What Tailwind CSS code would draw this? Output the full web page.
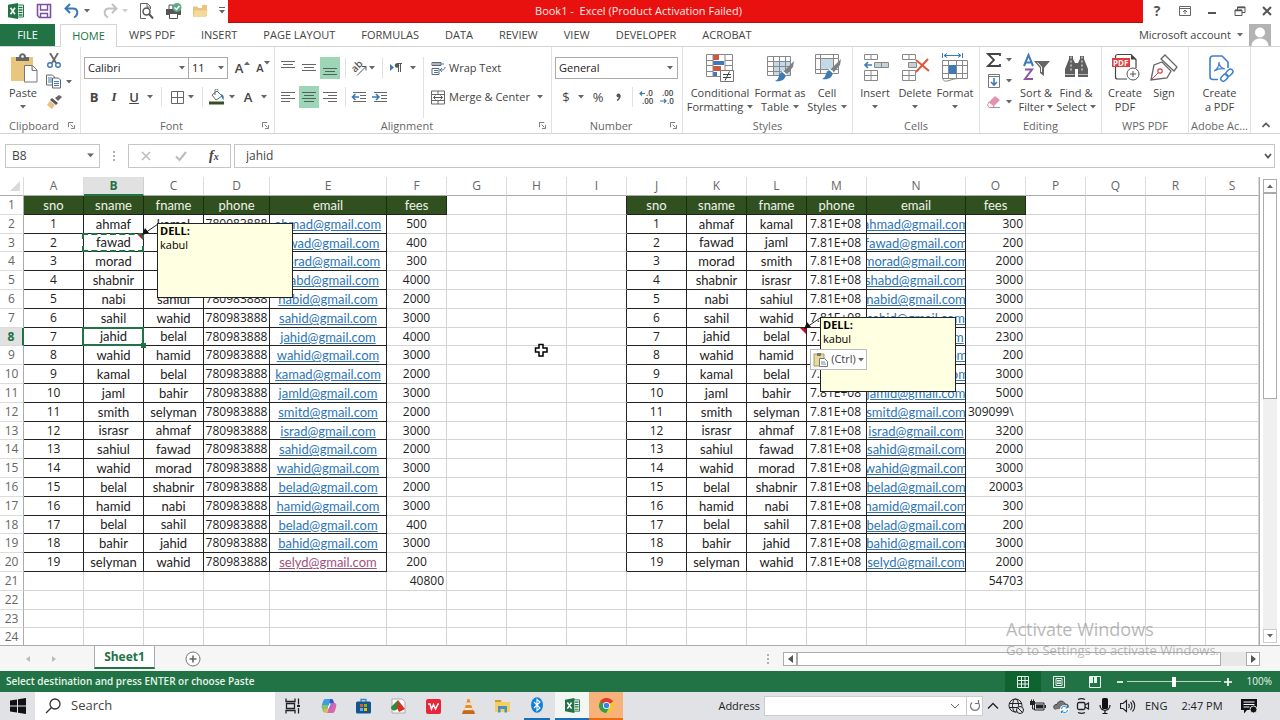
<!DOCTYPE html>
<html lang="en">
<head>
  <title>Book1 - Excel</title>
  <meta charset="utf-8">
  <meta name="viewport" content="width=device-width, initial-scale=1">
  <script src="https://cdn.jsdelivr.net/npm/@tailwindcss/browser@4"></script>
</head>

<body class="h-screen overflow-hidden bg-white font-['Open_Sans','Noto_Sans',sans-serif] text-[11px] text-[#444]">
  <!-- Shared icons -->
  <svg class="hidden">
    <symbol id="caret" viewBox="0 0 6 4"><path d="M0 0h6L3 3.5z" fill="#666"/></symbol>
    <symbol id="launcher" viewBox="0 0 8 8"><path d="M.5 6V.5H6M3 3l3 3M7.500 3.500v4h-4" fill="none" stroke="#666"/></symbol>
    <symbol id="excel" viewBox="0 0 16 16"><path d="M9 2h6.500v12H9z" fill="#fff" stroke="#217346"/><path d="M10.500 4.500h4M10.500 7h4M10.500 9.500h4M10.500 12h4" stroke="#217346" stroke-width="1.300"/><path d="M0 1.800L10 0v16L0 14.200z" fill="#217346"/><path d="M2.500 4.800l4.500 6.500M7 4.800l-4.500 6.500" stroke="#fff" stroke-width="1.600"/></symbol>
    <symbol id="brush" viewBox="0 0 22 22"><path d="M21 0l-1 6-6 7-3-3z" fill="#808080"/><path d="M10 11l3 3c-1 5-5 7-11 6 3-1 3-3 4-5 1-3 2-4 4-4z" fill="#3e7ab5"/><path d="M9 10l4.500 4" stroke="#fff" stroke-width="1.500"/></symbol>
  </svg>

  <div class="flex flex-col h-full">
    <!-- Title bar -->
    <header class="flex h-6 shrink-0">
      <div class="flex items-center w-[228px] pb-[3px]">
        <svg class="w-4 h-4 ml-2"><use href="#excel"/></svg>
        <button aria-label="Save" class="ml-3"><svg class="w-4 h-4" viewBox="0 0 16 16"><path d="M1.500 1.500h13v13h-11l-2-2z" fill="#fff" stroke="#7a4fa3" stroke-width="1.600"/><path d="M4.500 2v5h7V2M4.500 14.500v-4h7v4" fill="none" stroke="#7a4fa3" stroke-width="1.400"/></svg></button>
        <button aria-label="Undo" class="ml-3 flex items-center"><svg class="w-4 h-4" viewBox="0 0 16 16"><path d="M6 1L1.500 5.500 6 10M2 5.500h7c5 0 6 6 1 9" fill="none" stroke="#3b78b8" stroke-width="2"/></svg><svg class="w-[6px] h-1 ml-1"><use href="#caret"/></svg></button>
        <button aria-label="Redo" class="ml-3 flex items-center opacity-60"><svg class="w-4 h-4" viewBox="0 0 16 16"><path d="M10 1l4.500 4.500L10 10M14 5.500H7c-5 0-6 6-1 9" fill="none" stroke="#999" stroke-width="2"/></svg><svg class="w-[6px] h-1 ml-1 opacity-50"><use href="#caret"/></svg></button>
        <button aria-label="Print Preview" class="ml-[10px]"><svg class="w-4 h-4" viewBox="0 0 16 16"><path d="M8 15.500H2.500V.5h7l3 3V6M9 .5V4h3.500" fill="none" stroke="#666"/><circle cx="8.500" cy="8.500" r="3.500" fill="#fff" stroke="#555" stroke-width="1.500"/><path d="M11 11l4 4.500" stroke="#555" stroke-width="2"/></svg></button>
        <button aria-label="Quick Print" class="ml-3"><svg class="w-4 h-4" viewBox="0 0 16 16"><path d="M0 6h15v6H0z" fill="#555"/><path d="M3.500 10.500h8v5h-8zM3 6V2h4v4" fill="#fff" stroke="#555"/><circle cx="11" cy="4.500" r="4.500" fill="#5da98a"/><path d="M8.500 4.500l2 2 3-3.500" fill="none" stroke="#fff" stroke-width="1.500"/></svg></button>
        <button aria-label="Open" class="ml-[10px]"><svg class="w-4 h-4" viewBox="0 0 16 16"><path d="M1 14V3.500h4L6.500 5H10V2h5v11z" fill="#e8c47c"/><path d="M1 14l2-6.500h12.500L14 14z" fill="#f5d99b"/></svg></button>
        <button aria-label="Customize" class="ml-[10px]"><svg class="w-2 h-2" viewBox="0 0 8 8"><path d="M1 .5h6" stroke="#666"/><path d="M1 3h6L4 6.500z" fill="#666"/></svg></button>
      </div>
      <div class="flex-1 flex justify-center items-center h-[23px] pr-[94px] bg-[#e8110f] border-b border-[#b01010] text-[#fde8e4]">
        <h1>Book1 -&nbsp; Excel (Product Activation Failed)</h1>
      </div>
      <div class="flex items-center w-[137px] pb-[3px] pl-2">
        <button aria-label="Help" class="w-3 text-sm font-bold text-[#555]">?</button>
        <button aria-label="Ribbon Display Options" class="ml-4"><svg class="w-3 h-3" viewBox="0 0 12 12"><path d="M.5 1.500h11v9H.5zM.5 3.500h11M6 9V5M4 7l2-2 2 2" fill="none" stroke="#666"/></svg></button>
        <button aria-label="Minimize" class="ml-4"><svg class="w-3 h-3" viewBox="0 0 12 12"><path d="M1 8h8" stroke="#555" stroke-width="2"/></svg></button>
        <button aria-label="Restore" class="ml-[15px]"><svg class="w-3 h-3" viewBox="0 0 12 12"><path d="M1 5h7v5.500H1zM3.500 5V2h7.500v5.500H8" fill="none" stroke="#555"/><path d="M1 5.500h7M3.500 2.500h7.500" stroke="#555" stroke-width="1.500"/></svg></button>
        <button aria-label="Close" class="ml-[15px]"><svg class="w-3 h-3" viewBox="0 0 12 12"><path d="M2 2l8 8M10 2l-8 8" stroke="#555" stroke-width="2"/></svg></button>
      </div>
    </header>

    <!-- Ribbon tabs -->
    <nav class="flex h-[23px] shrink-0 items-end border-b border-[#d4d4d4]">
      <button class="w-[55px] h-full bg-[#217346] text-white">FILE</button>
      <button class="w-[57px] h-[23px] ml-[5px] -mb-px bg-white border border-b-0 border-[#d4d4d4] text-[#217346]">HOME</button>
      <div class="flex flex-1 h-full items-center gap-[26px] pl-3 whitespace-nowrap">
        <button>WPS PDF</button>
        <button>INSERT</button>
        <button>PAGE LAYOUT</button>
        <button>FORMULAS</button>
        <button>DATA</button>
        <button>REVIEW</button>
        <button>VIEW</button>
        <button>DEVELOPER</button>
        <button>ACROBAT</button>
      </div>
      <button class="flex items-center h-full whitespace-nowrap">Microsoft account <svg class="w-[6px] h-1 ml-[6px]"><use href="#caret"/></svg></button>
      <svg class="w-[22px] h-[22px] ml-[6px] mr-[9px]" viewBox="0 0 22 22"><path d="M0 0h22v22H0z" fill="#b3b3b3"/><circle cx="11" cy="8.500" r="5" fill="#fff"/><path d="M2.500 22c0-10 17-10 17 0z" fill="#fff"/></svg>
    </nav>

    <!-- Ribbon -->
    <section class="flex h-[87px] shrink-0 border-b border-[#d4d4d4] leading-[14px]">
      <!-- Clipboard -->
      <div class="flex flex-col w-[81px] border-r border-[#e1e1e1]">
        <div class="flex flex-1 pt-[6px]">
          <button class="flex flex-col items-center w-[46px]">
            <svg class="w-[30px] h-[30px] mb-[3px]" viewBox="0 0 30 30"><path d="M3 4h22v24H3z" fill="#e9c67d"/><path d="M8 4h3c0-5 7-5 7 0h3v4H8z" fill="#666"/><circle cx="14.500" cy="3.500" r="1.300" fill="#fff"/><path d="M16.500 12.500h8l4.500 4.500v12H16.500zM24 13v4.500h5" fill="#fff" stroke="#777"/></svg>
            Paste
            <svg class="w-[6px] h-1 mt-[5px]"><use href="#caret"/></svg>
          </button>
          <div class="flex flex-col gap-[6px]">
            <button aria-label="Cut"><svg class="w-4 h-[15px]" viewBox="0 0 16 15"><path d="M4 0l6 10M12 0L6 10" stroke="#666" stroke-width="1.800"/><circle cx="4" cy="12" r="2.300" fill="none" stroke="#3b78b8" stroke-width="1.400"/><circle cx="12" cy="12" r="2.300" fill="none" stroke="#3b78b8" stroke-width="1.400"/></svg></button>
            <button aria-label="Copy" class="flex items-center"><svg class="w-4 h-[15px]" viewBox="0 0 16 15"><path d="M.5 1h6l2 2v8h-8z" fill="#fff" stroke="#666"/><path d="M2 4h4M2 6h4M2 8h4" stroke="#3b78b8"/><path d="M6.500 4h6l2 2v8h-8z" fill="#fff" stroke="#666"/><path d="M8 7.500h5M8 9.500h5M8 11.500h5" stroke="#3b78b8"/></svg><svg class="w-[6px] h-1 ml-1"><use href="#caret"/></svg></button>
            <button aria-label="Format Painter"><svg class="w-4 h-[15px]" viewBox="0 0 16 15"><path d="M13 0l3 2-4 4-3-3z" fill="#666"/><path d="M6 3l6 5-2 2-6-5z" fill="#555"/><path d="M4 6l5 4-3 4-5-4z" fill="#edbd83"/></svg></button>
          </div>
        </div>
        <div class="flex items-center h-[15px] pr-[5px]"><span class="flex-1 text-center text-[#666]">Clipboard</span><svg class="w-[7px] h-[7px]"><use href="#launcher"/></svg></div>
      </div>

      <!-- Font -->
      <div class="flex flex-col w-[194px] border-r border-[#e1e1e1]">
        <div class="flex-1 pt-[10px] pl-[3px]">
          <div class="flex items-center h-[22px]">
            <label class="relative flex items-center"><select aria-label="Font" class="appearance-none w-[105px] h-[22px] pl-[3px] border border-[#ababab] bg-white text-[#222]"><option>Calibri</option></select><svg class="absolute right-1 w-[6px] h-1"><use href="#caret"/></svg></label>
            <label class="relative flex items-center -ml-px"><select aria-label="Font Size" class="appearance-none w-10 h-[22px] pl-[3px] border border-[#ababab] bg-white text-[#222]"><option>11</option></select><svg class="absolute right-1 w-[6px] h-1"><use href="#caret"/></svg></label>
            <button class="relative w-[22px] text-[13px] font-semibold" aria-label="Increase Font Size">A<svg class="absolute right-0 top-0 w-[6px] h-1 rotate-180"><use href="#caret"/></svg></button>
            <button class="relative w-[20px] text-[11px] font-semibold" aria-label="Decrease Font Size">A<svg class="absolute right-0 top-0 w-[6px] h-1"><use href="#caret"/></svg></button>
          </div>
          <div class="flex items-center h-[22px] mt-[7px] text-[13px]">
            <button class="w-5 font-bold">B</button>
            <button class="w-5 italic font-['Liberation_Serif',serif] font-bold">I</button>
            <button class="w-5 underline font-semibold">U</button>
            <svg class="w-[6px] h-1 mx-[3px]"><use href="#caret"/></svg>
            <div class="w-px h-5 mx-[5px] bg-[#e1e1e1]"></div>
            <button aria-label="Borders" class="w-5 flex justify-center"><svg class="w-[13px] h-[13px]" viewBox="0 0 13 13"><path d="M.5.5h12v12H.5zM6.500.5v12M.5 6.500h12" fill="none" stroke="#666"/></svg></button>
            <svg class="w-[6px] h-1 mx-px"><use href="#caret"/></svg>
            <div class="w-px h-5 ml-[7px] mr-[6px] bg-[#e1e1e1]"></div>
            <button aria-label="Fill Color"><svg class="w-4 h-4" viewBox="0 0 16 16"><path d="M3 6l5-4 5 5-6 4z" fill="#fff" stroke="#666"/><path d="M6 6V1.500c0-2 3-2 3 0" fill="none" stroke="#666"/><path d="M12 5c3 1 3 3 2.500 6-1.500-1-2-3-2.500-6z" fill="#3b78b8"/><path d="M0 12.500h15v3H0z" fill="#31501f"/></svg></button>
            <svg class="w-[6px] h-1 mx-1"><use href="#caret"/></svg>
            <button class="w-[18px] font-semibold" aria-label="Font Color">A</button>
            <svg class="w-[6px] h-1 mx-1"><use href="#caret"/></svg>
          </div>
        </div>
        <div class="flex items-center h-[15px] pr-[5px]"><span class="flex-1 text-center text-[#666]">Font</span><svg class="w-[7px] h-[7px]"><use href="#launcher"/></svg></div>
      </div>

      <!-- Alignment -->
      <div class="flex flex-col w-[277px] border-r border-[#e1e1e1]">
        <div class="flex flex-1 pt-[10px]">
          <div class="w-[149px] pl-[3px] border-r border-[#e1e1e1]">
            <div class="flex items-center h-[22px]">
              <button aria-label="Top Align" class="w-5 h-[22px] mr-px flex justify-center items-center"><svg class="w-[14px] h-4" viewBox="0 0 14 16"><path d="M0 1.500h14M2 4.500h10M0 7.500h14" stroke="#666"/></svg></button>
              <button aria-label="Middle Align" class="w-5 h-[22px] mr-px flex justify-center items-center"><svg class="w-[14px] h-4" viewBox="0 0 14 16"><path d="M0 4.500h14M2 7.500h10M0 10.500h14" stroke="#666"/></svg></button>
              <button aria-label="Bottom Align" class="w-5 h-[22px] flex justify-center items-center bg-[#9fd5b7]"><svg class="w-[14px] h-4" viewBox="0 0 14 16"><path d="M0 8.500h14M2 11.500h10M0 14.500h14" stroke="#4d6658"/></svg></button>
              <div class="w-px h-5 mx-[5px] bg-[#e1e1e1]"></div>
              <button aria-label="Orientation" class="flex items-center"><svg class="w-4 h-4" viewBox="0 0 16 16"><text x="1" y="10" font-size="10" font-family="Open Sans" font-weight="600" fill="#555" transform="rotate(-45 6 8)">ab</text><path d="M6 15.500L15 6.500M11 6.500h4v4" fill="none" stroke="#555"/></svg><svg class="w-[6px] h-1 ml-[2px]"><use href="#caret"/></svg></button>
              <div class="w-px h-5 mx-[7px] bg-[#e1e1e1]"></div>
              <button aria-label="Text Direction" class="flex items-center"><svg class="w-3 h-3" viewBox="0 0 12 12"><path d="M0 2l4 3.500L0 9z" fill="#3b78b8"/><path d="M12 1.500H7M8.500 1v9M10.500 1v9" stroke="#555" fill="none"/><circle cx="7" cy="3.500" r="2.200" fill="#555"/></svg><svg class="w-[6px] h-1 ml-2"><use href="#caret"/></svg></button>
            </div>
            <div class="flex items-center h-[22px] mt-[7px]">
              <button aria-label="Align Left" class="w-5 h-[22px] mr-px flex justify-center items-center"><svg class="w-[14px] h-3" viewBox="0 0 14 12"><path d="M0 1.500h14M0 4.500h9M0 7.500h14M0 10.500h9" stroke="#666"/></svg></button>
              <button aria-label="Center" class="w-5 h-[22px] mr-px flex justify-center items-center bg-[#9fd5b7]"><svg class="w-[14px] h-3" viewBox="0 0 14 12"><path d="M0 1.500h14M2 4.500h10M0 7.500h14M2 10.500h10" stroke="#4d6658"/></svg></button>
              <button aria-label="Align Right" class="w-5 h-[22px] flex justify-center items-center"><svg class="w-[14px] h-3" viewBox="0 0 14 12"><path d="M0 1.500h14M5 4.500h9M0 7.500h14M5 10.500h9" stroke="#666"/></svg></button>
              <div class="w-px h-5 mx-[5px] bg-[#e1e1e1]"></div>
              <button aria-label="Decrease Indent" class="mr-[5px]"><svg class="w-4 h-3" viewBox="0 0 16 12"><path d="M2 1.500h13M9 4.500h6M9 7.500h6M2 10.500h13" stroke="#666"/><path d="M8 6H2M4.500 3L1.500 6l3 3" fill="none" stroke="#3b78b8" stroke-width="1.600"/></svg></button>
              <button aria-label="Increase Indent"><svg class="w-4 h-3" viewBox="0 0 16 12"><path d="M2 1.500h13M9 4.500h6M9 7.500h6M2 10.500h13" stroke="#666"/><path d="M0 6h6M4 3l3 3-3 3" fill="none" stroke="#3b78b8" stroke-width="1.600"/></svg></button>
            </div>
          </div>
          <div class="flex-1 pl-[7px]">
            <button class="flex items-center h-[22px]"><svg class="w-[15px] h-[15px] mr-[3px]" viewBox="0 0 15 15"><path d="M1 1.500h9v3H1zM1 7.500h7v6H1z" fill="#fff" stroke="#666"/><path d="M2 3h11M3 9.500h4M3 11.500h4" stroke="#3b78b8"/><path d="M14 6c0 3-2 3-5 3M11 7L9 9l2 2" fill="none" stroke="#3b78b8"/></svg>Wrap Text</button>
            <button class="flex items-center h-[22px] mt-[7px]"><svg class="w-[15px] h-[15px] mr-[3px]" viewBox="0 0 15 15"><path d="M.5 1h13v13H.5zM.5 4.500h13M.5 10.500h13M7 1v3.500M7 10.500V14" fill="none" stroke="#666"/><path d="M2.500 7.500h9M4.500 5.500l-2 2 2 2M9.500 5.500l2 2-2 2" fill="none" stroke="#555"/></svg>Merge &amp; Center<svg class="w-[6px] h-1 ml-[7px]"><use href="#caret"/></svg></button>
          </div>
        </div>
        <div class="flex items-center h-[15px] pr-[5px]"><span class="flex-1 text-center text-[#666]">Alignment</span><svg class="w-[7px] h-[7px]"><use href="#launcher"/></svg></div>
      </div>

      <!-- Number -->
      <div class="flex flex-col w-[131px] border-r border-[#e1e1e1]">
        <div class="flex-1 pt-[10px] pl-[3px]">
          <label class="relative flex items-center"><select aria-label="Number Format" class="appearance-none w-[123px] h-[22px] pl-[3px] border border-[#ababab] bg-white text-[#222]"><option>General</option></select><svg class="absolute right-[9px] w-[6px] h-1"><use href="#caret"/></svg></label>
          <div class="flex items-center h-[22px] mt-[7px] text-[13px]">
            <button class="w-[22px]">$</button>
            <svg class="w-[6px] h-1 mx-px"><use href="#caret"/></svg>
            <button class="w-[26px]">%</button>
            <button aria-label="Comma Style" class="w-[14px] flex justify-center"><svg class="w-[5px] h-2" viewBox="0 0 5 8"><circle cx="2.500" cy="2.500" r="2" fill="#555"/><path d="M4 2.500c0 2-1 4-3 5" fill="none" stroke="#555" stroke-width="1.300"/></svg></button>
            <div class="w-px h-5 ml-[7px] mr-[6px] bg-[#e1e1e1]"></div>
            <button aria-label="Increase Decimal"><svg class="w-4 h-4 overflow-visible" viewBox="0 0 16 16"><text x="7" y="7" font-size="8" font-family="Open Sans" font-weight="600" fill="#444">.0</text><text x="3" y="15" font-size="8" font-family="Open Sans" font-weight="600" fill="#444">.00</text><path d="M6 4.500H1M3 2.500l-2 2 2 2" fill="none" stroke="#3b78b8" stroke-width="1.200"/></svg></button>
            <button aria-label="Decrease Decimal" class="ml-1"><svg class="w-4 h-4 overflow-visible" viewBox="0 0 16 16"><text x="3" y="7" font-size="8" font-family="Open Sans" font-weight="600" fill="#444">.00</text><text x="8" y="15" font-size="8" font-family="Open Sans" font-weight="600" fill="#444">.0</text><path d="M1 12h6M5 10l2 2-2 2" fill="none" stroke="#3b78b8" stroke-width="1.200"/></svg></button>
          </div>
        </div>
        <div class="flex items-center h-[15px] pr-[5px]"><span class="flex-1 text-center text-[#666]">Number</span><svg class="w-[7px] h-[7px]"><use href="#launcher"/></svg></div>
      </div>

      <!-- Styles -->
      <div class="flex flex-col w-[170px] border-r border-[#e1e1e1] whitespace-nowrap">
        <div class="flex flex-1 pt-[6px] pl-[4px]">
          <button class="flex flex-col items-center w-[66px]">
            <svg class="w-[30px] h-[30px] mb-[3px]" viewBox="0 0 30 30"><path d="M1.500 1.500h26v22h-26z" fill="#fff"/><path d="M8 2h6v5H8zM8 13h8v5H8z" fill="#d0573c"/><path d="M8 8h11v4H8zM8 19h4v4H8z" fill="#3e7ab5"/><path d="M1.500 1.500h26v22h-26zM8 1.500v22M20 1.500v22M1.500 7.500H8M1.500 12.500H8M1.500 18.500H8M20 7.500h7M20 12.500h7" fill="none" stroke="#888"/><path d="M15.500 17.500h13v11h-13z" fill="#fff" stroke="#777"/><path d="M18 21.500h8M18 24.500h8M24.500 18.500l-4.500 9" stroke="#444"/></svg>
            <span>Conditional</span><span class="flex items-center">Formatting<svg class="w-[6px] h-1 ml-1"><use href="#caret"/></svg></span>
          </button>
          <button class="flex flex-col items-center w-[54px]">
            <svg class="w-[30px] h-[30px] mb-[3px]" viewBox="0 0 30 30"><path d="M2.500 3.500h23v19h-23z" fill="#fff"/><path d="M8 8h17v14H8z" fill="#c3d9e8"/><path d="M2.500 3.500h23v19h-23zM2.500 8.500h23M2.500 13.500h23M2.500 18.500h23M8.500 3.500v19M14.500 3.500v19M20.500 3.500v19" fill="none" stroke="#888"/><use href="#brush" x="8" y="8" width="22" height="22"/></svg>
            <span>Format as</span><span class="flex items-center">Table<svg class="w-[6px] h-1 ml-1"><use href="#caret"/></svg></span>
          </button>
          <button class="flex flex-col items-center w-[40px]">
            <svg class="w-[30px] h-[30px] mb-[3px]" viewBox="0 0 30 30"><path d="M3.500 1.500h23v19h-23z" fill="#fff"/><path d="M8 6h14v10H8z" fill="#c3d9e8"/><path d="M3.500 1.500h23v19h-23zM3.500 5.500h23M3.500 16.500h23M8.500 1.500v19M21.500 1.500v19" fill="none" stroke="#888"/><use href="#brush" x="8" y="6" width="22" height="22"/></svg>
            <span>Cell</span><span class="flex items-center">Styles<svg class="w-[6px] h-1 ml-1"><use href="#caret"/></svg></span>
          </button>
        </div>
        <div class="h-[15px] leading-[15px] text-center text-[#666]">Styles</div>
      </div>

      <!-- Cells -->
      <div class="flex flex-col w-[127px] border-r border-[#e1e1e1]">
        <div class="flex flex-1 pt-[6px] pl-[2px]">
          <button class="flex flex-col items-center w-10">
            <svg class="w-[30px] h-[30px] mb-[3px]" viewBox="0 0 30 30"><path d="M4.500 1.500h13v5h-13zM11 1.500v5M4.500 17.500h13v10h-13zM11 17.500v10M4.500 22.500h13" fill="#fff" stroke="#888"/><path d="M14.500 9.500h14v5h-14zM21.500 9.500v5" fill="#c3d1d9" stroke="#888"/><path d="M12 12H5M8 9l-3 3 3 3" fill="none" stroke="#3e7ab5" stroke-width="1.600"/></svg>
            Insert<svg class="w-[6px] h-1 mt-[5px]"><use href="#caret"/></svg>
          </button>
          <button class="flex flex-col items-center w-10">
            <svg class="w-[30px] h-[30px] mb-[3px]" viewBox="0 0 30 30"><path d="M2.500 1.500h13v5h-13zM9 1.500v5M2.500 17.500h13v10h-13zM9 17.500v10M2.500 22.500h13" fill="#fff" stroke="#888"/><path d="M8.500 9.500h8v5h-8z" fill="#c3d1d9" stroke="#888"/><path d="M16 7l13 11M28 6L16 19" stroke="#d9593d" stroke-width="2"/></svg>
            Delete<svg class="w-[6px] h-1 mt-[5px]"><use href="#caret"/></svg>
          </button>
          <button class="flex flex-col items-center w-10">
            <svg class="w-[30px] h-[30px] mb-[3px]" viewBox="0 0 30 30"><path d="M2.500 7.500h25v18h-25zM2.500 12.500h25M2.500 20.500h25M8.500 7.500v18M16.500 7.500v18M22.500 7.500v18M3 25.500c0 3 3 3 6 2s6-2 10-2" fill="none" stroke="#888"/><path d="M9 12h7v9H9z" fill="#3e7ab5"/><path d="M2.500 0v5M22.500 0v5M4 2.500h17M7 .5l-3 2 3 2M18 .5l3 2-3 2" fill="none" stroke="#3e7ab5"/></svg>
            Format<svg class="w-[6px] h-1 mt-[5px]"><use href="#caret"/></svg>
          </button>
        </div>
        <div class="h-[15px] leading-[15px] text-center text-[#666]">Cells</div>
      </div>

      <!-- Editing -->
      <div class="flex flex-col w-[122px] border-r border-[#e1e1e1] whitespace-nowrap">
        <div class="flex flex-1 pt-[6px] pl-1">
          <div class="flex flex-col gap-[7px] w-8 pl-[2px]">
            <button aria-label="AutoSum" class="flex items-center"><svg class="w-4 h-[14px]" viewBox="0 0 16 14"><path d="M14 3V1H2l6 6-6 6h12v-2" fill="none" stroke="#444" stroke-width="1.800"/></svg><svg class="w-[6px] h-1 ml-1"><use href="#caret"/></svg></button>
            <button aria-label="Fill" class="flex items-center"><svg class="w-4 h-[14px]" viewBox="0 0 16 14"><path d="M2.500.5h11v13h-11zM2.500 2.500h11" fill="#fff" stroke="#777"/><path d="M8 4v7M5 8l3 3 3-3" fill="none" stroke="#3e7ab5" stroke-width="1.600"/></svg><svg class="w-[6px] h-1 ml-1"><use href="#caret"/></svg></button>
            <button aria-label="Clear" class="flex items-center"><svg class="w-4 h-[14px]" viewBox="0 0 16 14"><path d="M9 1l5 4-6 6-5-4z" fill="#e591b0"/><path d="M3 7l5 4-1 1.500H3L1.500 10z" fill="#fff" stroke="#d58aa6"/><path d="M6 12.500h8" stroke="#999"/></svg><svg class="w-[6px] h-1 ml-1"><use href="#caret"/></svg></button>
          </div>
          <button class="flex flex-col items-center w-10">
            <svg class="w-[30px] h-[30px] mb-[3px]" viewBox="0 0 30 30"><path d="M3 13L7.500 2 12 13M4.500 9.500h6" fill="none" stroke="#3e7ab5" stroke-width="2"/><path d="M4 16.500h7l-7 9.500h8" fill="none" stroke="#8c56a8" stroke-width="2"/><path d="M13 8h16l-6 7v8l-4-3v-5z" fill="#666"/><path d="M16.500 9.500l4 4.500v5" fill="none" stroke="#fff"/></svg>
            <span>Sort &amp;</span><span class="flex items-center">Filter<svg class="w-[6px] h-1 ml-[3px]"><use href="#caret"/></svg></span>
          </button>
          <button class="flex flex-col items-center w-10">
            <svg class="w-[30px] h-[30px] mb-[3px]" viewBox="0 0 30 30"><path d="M8 3h4v3l2 4h3l2-4V3h4v3l4 10v8H17v-8h-3v8H4v-8L8 6z" fill="#5e5e5e"/><path d="M10 3.500v16M21 3.500v16" stroke="#fff" stroke-dasharray="2 2"/><path d="M4 21.500h9.500M17.500 21.500H27" stroke="#bbb"/></svg>
            <span>Find &amp;</span><span class="flex items-center">Select<svg class="w-[6px] h-1 ml-[3px]"><use href="#caret"/></svg></span>
          </button>
        </div>
        <div class="h-[15px] leading-[15px] text-center text-[#666]">Editing</div>
      </div>

      <!-- WPS PDF -->
      <div class="flex flex-col w-[87px] border-r border-[#e1e1e1]">
        <div class="flex flex-1 pt-[6px] pl-[3px]">
          <button class="flex flex-col items-center w-10">
            <svg class="w-[30px] h-[30px] mb-[3px]" viewBox="0 0 30 30"><path d="M5.500 6V3.500c0-1 1-2 2-2H21l5 5V15M5.500 14v10c0 1 1 2 2 2H17" fill="none" stroke="#444" stroke-width="1.200"/><path d="M21 1.500l5 5h-5z" fill="#444"/><path d="M2 5h18v9H2z" fill="#e23b3b"/><text x="3" y="12.500" font-size="8" font-weight="700" font-family="Open Sans" fill="#fff">PDF</text><circle cx="23" cy="21" r="6" fill="#fff" stroke="#555"/><path d="M20 21h6M23 18v6" stroke="#555"/></svg>
            <span>Create<br>PDF</span>
          </button>
          <button class="flex flex-col items-center w-[38px]">
            <svg class="w-[30px] h-[30px] mb-[3px]" viewBox="0 0 30 30"><path d="M2 27l3-15 8-3 9 9-4 7z" fill="#fff" stroke="#666" stroke-width="1.300"/><path d="M16 2l12 12-3 4L12 6z" fill="#fff" stroke="#666" stroke-width="1.300"/><path d="M2 27l7-7" stroke="#d04050"/><circle cx="11" cy="18" r="2.200" fill="#fff" stroke="#d04050" stroke-width="1.200"/></svg>
            Sign
          </button>
        </div>
        <div class="h-[15px] leading-[15px] text-center text-[#666]">WPS PDF</div>
      </div>

      <!-- Adobe Acrobat -->
      <div class="flex flex-col w-[62px] border-r border-[#e1e1e1]">
        <button class="flex flex-col flex-1 items-center pt-[6px]">
          <svg class="w-[30px] h-[30px] mb-[3px]" viewBox="0 0 30 30"><path d="M13 26.500H8c-2 0-3-1-3-3V6c0-2 1-3 3-3h9l6 6v6" fill="none" stroke="#3f7fd0" stroke-width="1.600"/><path d="M9 18c4-2 5-6 5-9 0 4 2 6 6 7-4-1-7 0-11 2z" fill="none" stroke="#3f7fd0" stroke-width="1.200"/><rect x="-3.500" y="-2.500" width="8" height="5" rx="2.500" transform="translate(19 25) rotate(-45)" fill="none" stroke="#3f7fd0" stroke-width="1.500"/><rect x="-3.500" y="-2.500" width="8" height="5" rx="2.500" transform="translate(24 20) rotate(-45)" fill="none" stroke="#3f7fd0" stroke-width="1.500"/></svg>
          <span>Create<br>a PDF</span>
        </button>
        <div class="h-[15px] leading-[15px] text-center text-[#666] whitespace-nowrap">Adobe Ac...</div>
      </div>
      <button aria-label="Collapse the Ribbon" class="flex flex-1 items-end justify-center pb-1"><svg class="w-2 h-2" viewBox="0 0 8 8"><path d="M.5 6L4 2.500 7.500 6" fill="none" stroke="#555" stroke-width="1.600"/></svg></button>
    </section>

    <!-- Formula bar -->
    <section class="flex h-[43px] shrink-0 items-center pl-[5px] pr-[5px]">
      <label class="relative flex items-center"><input aria-label="Name Box" value="B8" class="w-[95px] h-6 pl-[6px] border border-[#c6c6c6] text-xs"><svg class="absolute right-[6px] w-[7px] h-[5px]" viewBox="0 0 6 4"><use href="#caret"/></svg></label>
      <svg class="w-[28px] h-3" viewBox="0 0 28 12"><path d="M14 1v10" stroke="#999" stroke-width="1.500" stroke-dasharray="2 2"/></svg>
      <div class="flex items-center justify-around w-[103px] h-6 border border-[#c6c6c6]">
        <button aria-label="Cancel"><svg class="w-3 h-3" viewBox="0 0 12 12"><path d="M2 2l8 8M10 2l-8 8" stroke="#bbb" stroke-width="1.500"/></svg></button>
        <button aria-label="Enter"><svg class="w-3 h-3" viewBox="0 0 12 12"><path d="M1 6.500L4.500 10 11 2" fill="none" stroke="#bbb" stroke-width="2"/></svg></button>
        <button class="italic font-['Liberation_Serif',serif] text-sm font-bold">f<span class="text-[10px]">x</span></button>
      </div>
      <label class="relative flex flex-1 items-center ml-[3px]"><input aria-label="Formula Bar" value="jahid" class="w-full h-6 pl-[11px] border border-[#c6c6c6] text-xs"><svg class="absolute right-[3px] w-2 h-2" viewBox="0 0 8 8"><path d="M1 2l3 3.500L7 2" fill="none" stroke="#555" stroke-width="1.800"/></svg></label>
    </section>

    <!-- Sheet -->
    <main class="relative flex flex-1 min-h-0 border-b border-[#ababab]">
      <div class="flex-1 min-w-0 overflow-hidden border-r border-[#ababab] font-['Lato','Noto_Sans',sans-serif] text-[13px] text-[#222]">
        <table class="w-full table-fixed border-separate border-spacing-0 leading-none">
          <colgroup id="cols"></colgroup>
          <thead><tr id="letters" class="h-[19px]"></tr></thead>
          <tbody id="rows"></tbody>
        </table>
      </div>
      <div class="flex flex-col items-center w-[20px] py-[2px]">
        <button aria-label="Scroll Up" class="flex items-center justify-center w-[14px] h-[14px] border border-[#ababab] bg-white"><svg class="w-[6px] h-1 rotate-180"><use href="#caret"/></svg></button>
        <div class="flex-1 w-[14px] bg-[#f0f0f0]"><div class="h-[206px] border border-[#ababab] bg-white"></div></div>
        <button aria-label="Scroll Down" class="flex items-center justify-center w-[14px] h-[14px] border border-[#ccc] bg-white"><svg class="w-[6px] h-1"><use href="#caret"/></svg></button>
      </div>

      <!-- Cell comments -->
      <svg class="absolute left-[142px] top-[46px] w-4 h-3" viewBox="0 0 16 12"><path d="M16 1L3 10" stroke="#222"/><path d="M0 12l3-7 4 5z" fill="#111"/></svg>
      <div class="absolute left-[157px] top-[46px] w-[136px] h-[75px] px-[2px] border border-[#222] bg-[#ffffe1] leading-[14px] text-black"><b>DELL:</b><br>kabul</div>
      <svg class="absolute left-[804px] top-[140px] w-4 h-3" viewBox="0 0 16 12"><path d="M16 1L3 10" stroke="#222"/><path d="M0 12l3-7 4 5z" fill="#111"/></svg>
      <div class="absolute left-[820px] top-[140px] w-[136px] h-[75px] px-[2px] border border-[#222] bg-[#ffffe1] leading-[14px] text-black"><b>DELL:</b><br>kabul</div>
      <button class="absolute left-[810px] top-[172px] flex items-center justify-center w-[57px] h-[21px] border border-[#bbb] bg-white">
        <svg class="w-[15px] h-[15px] mr-[3px]" viewBox="0 0 15 15"><path d="M1 2h10v12H1z" fill="#e5dc9a" stroke="#a79c60"/><path d="M4 1h4v3H4z" fill="#777"/><path d="M6.500 6.500h5l3 3v5h-8z" fill="#fff" stroke="#777"/><path d="M8 10h4M8 12h5" stroke="#6c8cb0"/></svg>
        (Ctrl)<svg class="w-[6px] h-1 ml-[2px]"><use href="#caret"/></svg>
      </button>
      <svg class="absolute left-[534px] top-[166px] w-[15px] h-[15px]" viewBox="0 0 15 15"><path d="M5 1.500h4V5h4v4H9v4H5V9H1.500V5H5z" fill="#fff" stroke="#000" stroke-width="1.500"/></svg>

      <!-- Activation notice -->
      <div class="absolute left-[1006px] top-[440px] z-10 whitespace-nowrap text-[#999]/70">
        <p class="text-[18px] leading-6">Activate Windows</p>
        <p class="text-[13px] leading-[18px]">Go to Settings to activate Windows.</p>
      </div>
    </main>

    <!-- Sheet tabs -->
    <section class="flex h-[25px] shrink-0 items-center bg-[#f6f6f6]">
      <button aria-label="Previous Sheet" class="ml-[25px]"><svg class="w-[6px] h-2" viewBox="0 0 6 8"><path d="M5 1v6L1 4z" fill="#bbb"/></svg></button>
      <button aria-label="Next Sheet" class="ml-5"><svg class="w-[6px] h-2" viewBox="0 0 6 8"><path d="M1 1v6l4-3z" fill="#bbb"/></svg></button>
      <button class="w-[61px] h-[24px] mb-auto ml-[37px] -mt-px pt-px bg-white border-x border-[#ababab] border-b-2 border-b-[#217346] text-xs font-bold text-[#217346]">Sheet1</button>
      <button aria-label="New Sheet" class="ml-[30px]"><svg class="w-4 h-4" viewBox="0 0 16 16"><circle cx="8" cy="8" r="7" fill="#fff" stroke="#777"/><path d="M4.500 8h7M8 4.500v7" stroke="#666" stroke-width="1.600"/></svg></button>
      <svg class="w-1 h-3 ml-auto" viewBox="0 0 4 12"><path d="M2 1v10" stroke="#999" stroke-width="1.500" stroke-dasharray="2 2"/></svg>
      <div class="flex w-[477px] h-[14px] ml-[13px] mr-5 bg-[#e8e8e8]">
        <button aria-label="Scroll Left" class="flex items-center justify-center w-[14px] border border-[#ababab] bg-white"><svg class="w-[5px] h-2" viewBox="0 0 5 8"><path d="M5 0v8L0 4z" fill="#555"/></svg></button>
        <div class="w-[424px] border border-[#ababab] bg-white"></div>
        <button aria-label="Scroll Right" class="flex items-center justify-center w-[14px] ml-auto border border-[#ababab] bg-white"><svg class="w-[5px] h-2" viewBox="0 0 5 8"><path d="M0 0v8l5-4z" fill="#555"/></svg></button>
      </div>
    </section>

    <!-- Status bar -->
    <section class="flex h-[21px] shrink-0 items-center pl-[6px] pr-2 bg-[#217346] text-[#e8f5ec]">
      <span class="flex-1 text-[10px] font-semibold">Select destination and press ENTER or choose Paste</span>
      <button aria-label="Normal" class="flex items-center justify-center w-9 h-full bg-[#0f6331]"><svg class="w-3 h-3" viewBox="0 0 12 12"><path d="M.5.5h11v11H.5zM.5 4.500h11M.5 8h11M4.500.5v11M8 .5v11" fill="none" stroke="#e8f5ec"/></svg></button>
      <button aria-label="Page Layout" class="flex items-center justify-center w-9 h-full"><svg class="w-3 h-3" viewBox="0 0 12 12"><path d="M.5.5h11v11H.5zM3 2.500h6v7H3zM4 4.500h4M4 6h4M4 7.500h4" fill="none" stroke="#e8f5ec"/></svg></button>
      <button aria-label="Page Break Preview" class="flex items-center justify-center w-9 h-full"><svg class="w-3 h-3" viewBox="0 0 12 12"><path d="M.5.5h11v11H.5z" fill="none" stroke="#e8f5ec"/><path d="M1 1h3v6H1zM5 1h3v6H5z" fill="#e8f5ec"/></svg></button>
      <button aria-label="Zoom Out" class="ml-[3px]"><svg class="w-2 h-2" viewBox="0 0 8 8"><path d="M1 4h6" stroke="#fff" stroke-width="1.600"/></svg></button>
      <input type="range" aria-label="Zoom" min="0" max="200" value="100" class="appearance-none w-[94px] h-px mx-[3px] bg-[#b9d8c5] [&::-webkit-slider-thumb]:appearance-none [&::-webkit-slider-thumb]:w-1 [&::-webkit-slider-thumb]:h-[10px] [&::-webkit-slider-thumb]:bg-white">
      <button aria-label="Zoom In"><svg class="w-2 h-2" viewBox="0 0 8 8"><path d="M0 4h8M4 0v8" stroke="#fff" stroke-width="1.600"/></svg></button>
      <button class="w-10 text-right text-[10px]">100%</button>
    </section>

    <!-- Taskbar -->
    <footer class="flex h-7 shrink-0 items-center bg-[#e0e2e6] text-[#222]">
      <button aria-label="Start" class="flex justify-center w-[35px]"><svg class="w-4 h-4" viewBox="0 0 16 16"><path d="M0 2.500l7-1v6H0zM8 1.300L16 0v7.500H8zM0 8.500h7v6l-7-1zM8 8.500h8V16l-8-1.300z" fill="#111"/></svg></button>
      <label class="flex items-center w-[240px] h-full bg-white"><svg class="w-4 h-4 ml-[10px]" viewBox="0 0 16 16"><circle cx="10" cy="6" r="5" fill="none" stroke="#333" stroke-width="1.300"/><path d="M6.500 9.500L1 15" stroke="#333" stroke-width="1.300"/></svg><input aria-label="Search" placeholder="Search" class="w-[180px] ml-[10px] text-[13px] placeholder:text-[#444]"></label>
      <div class="flex h-full items-center">
        <button aria-label="Task View" class="flex justify-center w-9"><svg class="w-4 h-4" viewBox="0 0 16 16"><path d="M1 .5v3h9v-3M1 15.500v-3h9v3M1.500 5.500h8v5h-8zM13.500.5v6M13.500 10v5.500" fill="none" stroke="#222" stroke-width="1.300"/><path d="M12 7h3v2h-3z" fill="#222"/></svg></button>
        <button aria-label="Copilot" class="flex justify-center w-[35px]"><svg class="w-4 h-4" viewBox="0 0 16 16"><path d="M5 1h5c1.500 0 2 1 2.500 3H9L6.500 11H3C.5 11 .3 9 1 6.500l1.200-3.500C2.700 1.500 3.500 1 5 1z" fill="#3d9fe0"/><path d="M9 1h1.500C12 1 12.500 3 13 5H8.500z" fill="#3a55c4"/><path d="M1 7h6l-2 7c-2 1-3 0-3.500-2z" fill="#8fc35a"/><path d="M3 11h4l-1.500 4C4 15 3 14 3 11z" fill="#e9b83c"/><path d="M9.500 5H13c2.500 0 2.700 2 2 4.500L13.800 13c-.5 1.500-1.300 2-2.800 2H6z" fill="#d966a8"/><path d="M9.500 5H13l-3 6H7.500z" fill="#a86ad8"/><path d="M9 6l-2 4.500" stroke="#fff" stroke-width="1.200"/></svg></button>
        <button aria-label="Store" class="flex justify-center w-[35px]"><svg class="w-[15px] h-4" viewBox="0 0 15 16"><path d="M5 4V1.500h5V4" fill="none" stroke="#2b88c8" stroke-width="1.300"/><rect y="3.500" width="15" height="12" rx="1.500" fill="#14548f"/><path d="M4 6h3v3H4z" fill="#f25022"/><path d="M8 6h3v3H8z" fill="#7fba00"/><path d="M4 10h3v3H4z" fill="#4fb3f0"/><path d="M8 10h3v3H8z" fill="#ffb900"/></svg></button>
        <button aria-label="Media" class="flex justify-center w-[35px]"><svg class="w-[15px] h-4" viewBox="0 0 15 16"><path d="M1 1h10l3 3v11H1z" fill="#fff" stroke="#aaa"/><path d="M7 2L0 9c0 4 4 5 7 1z" fill="#2e8b3d"/><path d="M7 2l7 9-6 3-2-4z" fill="#d93025"/></svg></button>
        <button aria-label="WPS" class="flex justify-center w-[35px]"><svg class="w-[15px] h-[15px]" viewBox="0 0 15 15"><rect width="15" height="15" rx="2" fill="#e8263a"/><path d="M2 5h2l1.500 5L7.500 5.500 9.500 10 12 5h1" fill="none" stroke="#fff" stroke-width="1.500"/></svg></button>
        <button aria-label="VLC" class="flex justify-center w-[34px]"><svg class="w-[13px] h-[15px]" viewBox="0 0 13 15"><path d="M5.500 0h2L11 12H2z" fill="#f08a24"/><path d="M4.600 3.500h3.800l.8 2.500H3.800zM3 9h7l.6 2H2.400z" fill="#f6e9dc"/><path d="M1 11.500h11l1 3.500H0z" fill="#c56a1a"/></svg></button>
        <button aria-label="File Explorer" class="flex justify-center w-[34px]"><svg class="w-[15px] h-[14px]" viewBox="0 0 15 14"><path d="M0 1h6l1.500 2H15v10H0z" fill="#f5cf63"/><path d="M0 1h6v2H0z" fill="#d59a2e"/><path d="M3 13.500V7h9v6.500H9.500V10h-4v3.500z" fill="#4a90c2"/></svg></button>
        <button aria-label="Bluetooth" class="flex justify-center items-center w-[26px] mx-[5px] h-full border-b-2 border-[#1b6fb8]"><svg class="w-3 h-4" viewBox="0 0 12 16"><ellipse cx="6" cy="8" rx="6" ry="7.800" fill="#1380d8"/><path d="M3 5l6 6-3 2.500v-11L9 5l-6 6" fill="none" stroke="#fff" stroke-width="1.100"/></svg></button>
        <button aria-label="Excel" class="flex justify-center items-center w-[34px] h-full bg-[#f3f7f4] border-b-2 border-[#1b6fb8]"><svg class="w-[15px] h-[15px]"><use href="#excel"/></svg></button>
        <button aria-label="Chrome" class="flex justify-center items-center w-[34px] h-full bg-[#f7b27c] border-b-2 border-[#f06a10]"><svg class="w-[15px] h-[15px]" viewBox="0 0 16 16"><circle cx="8" cy="8" r="8" fill="#f8c52c"/><path d="M8 8L1 4c3-5.500 11-5.500 14 0z" fill="#de3b2b"/><path d="M8 8L1 4c-3 6 1 11.500 6.500 12L11 10z" fill="#2f9e4a"/><circle cx="8" cy="8" r="3.800" fill="#fff"/><circle cx="8" cy="8" r="2.900" fill="#3f7fe8"/></svg></button>
      </div>
      <label class="ml-auto mr-1" for="address">Address</label>
      <div class="flex items-center h-5 border border-[#ccc] bg-white">
        <input id="address" class="w-[186px] h-full"><svg class="w-2 h-2 mr-[7px]" viewBox="0 0 8 8"><path d="M0 2l4 4 4-4" fill="none" stroke="#666"/></svg>
        <button aria-label="Refresh" class="flex items-center justify-center w-4 h-full border-l border-[#ccc]"><svg class="w-3 h-3" viewBox="0 0 12 12"><path d="M3 2.500a4.500 4.500 0 1 0 6 0M9.500 0v3.500H6" fill="none" stroke="#777" stroke-width="1.200"/></svg></button>
      </div>
      <div class="flex items-center w-[297px] pl-1">
        <svg class="w-3 h-3" viewBox="0 0 12 12"><path d="M1 8.500l5-5 5 5" fill="none" stroke="#222" stroke-width="1.300"/></svg>
        <svg class="w-4 h-4 ml-[9px]" viewBox="0 0 16 16"><circle cx="7.500" cy="7.500" r="6.500" fill="none" stroke="#222"/><ellipse cx="7.500" cy="7.500" rx="3" ry="6.500" fill="none" stroke="#222"/><path d="M1 5.500h13M1 9.500h9" stroke="#222"/><circle cx="12" cy="12" r="3.500" fill="#e0e2e6" stroke="#222"/><path d="M9.500 9.500l5 5" stroke="#222"/></svg>
        <svg class="w-4 h-4 ml-[6px]" viewBox="0 0 16 16"><path d="M4.500 5h9.500v7H4.500z" fill="none" stroke="#222"/><path d="M6 6.500h7v4H6zM14.500 7H16v3h-1.500zM0 3h5v4H0z" fill="#222"/><path d="M1.500 1.500V3M3.500 1.500V3M2.500 7v4h2" stroke="#222" fill="none"/></svg>
        <svg class="w-4 h-4 ml-[7px]" viewBox="0 0 16 16"><path d="M2 11.500C-.5 9 1 6 4 6.500 5 2 11 2 12 6c3 0 4 2 3.500 4" fill="#777" stroke="#444"/><circle cx="11.500" cy="11.500" r="4.500" fill="#fff"/><path d="M8.500 11a3 3 0 0 1 5.500-1.500M14.500 12a3 3 0 0 1-5.500 1.500M14.500 8v2h-2M8.500 15v-2h2" fill="none" stroke="#1b7fd0"/></svg>
        <svg class="w-4 h-4 ml-[6px]" viewBox="0 0 16 16"><rect x="2.500" y="4.500" width="7.500" height="7" rx="1.500" fill="none" stroke="#222" stroke-width="1.300"/><path d="M10 7l3.500-2v6L10 9M3 1.500c2-1 5-1 7 0M3 14.500c2 1 5 1 7 0" fill="none" stroke="#222" stroke-width="1.200"/></svg>
        <svg class="w-4 h-4 ml-[6px]" viewBox="0 0 16 16"><rect x="5" width="6" height="11" rx="1.500" fill="#111"/><path d="M3 7c0 7 10 7 10 0M8 12v3.500M5.500 15.500h5" fill="none" stroke="#111" stroke-width="1.200"/></svg>
        <svg class="w-4 h-4 ml-[7px]" viewBox="0 0 16 16"><path d="M.5 5.500H3L6.500 2.500v11L3 10.500H.5zM8.500 6c1 1 1 3 0 4M10.500 4c2 2 2 6 0 8M12.500 2.500c3 3 3 8 0 11" fill="none" stroke="#222" stroke-width="1.100"/></svg>
        <span class="ml-[9px]">ENG</span>
        <span class="ml-[14px] whitespace-nowrap">2:47 PM</span>
        <button aria-label="Notifications" class="ml-auto mr-[23px]"><svg class="w-4 h-4" viewBox="0 0 16 16"><path d="M0 1h16v11H6l-3 3.500V12H0z" fill="#111"/><path d="M2.500 4h11M2.500 6.500h11M2.500 9h6" stroke="#fff"/><circle cx="12.500" cy="11.500" r="3.500" fill="#111" stroke="#ddd"/></svg></button>
      </div>
    </footer>
  </div>

  <script>
    const widths = [24, 60, 60, 60, 66, 117, 60, 60, 60, 60, 60, 60, 60, 60, 99, 60, 60, 60, 60];
    const heads = ['sno', 'sname', 'fname', 'phone', 'email', 'fees'];
    const sname = ['ahmaf', 'fawad', 'morad', 'shabnir', 'nabi', 'sahil', 'jahid', 'wahid', 'kamal', 'jaml', 'smith', 'israsr', 'sahiul', 'wahid', 'belal', 'hamid', 'belal', 'bahir', 'selyman'];
    const fname = ['kamal', 'jaml', 'smith', 'israsr', 'sahiul', 'wahid', 'belal', 'hamid', 'belal', 'bahir', 'selyman', 'ahmaf', 'fawad', 'morad', 'shabnir', 'nabi', 'sahil', 'jahid', 'wahid'];
    const email = ['ahmad', 'fawad', 'morad', 'shabd', 'nabid', 'sahid', 'jahid', 'wahid', 'kamad', 'jamld', 'smitd', 'israd', 'sahid', 'wahid', 'belad', 'hamid', 'belad', 'bahid', 'selyd'];
    const fees = [500, 400, 300, 4000, 2000, 3000, 4000, 3000, 2000, 3000, 2000, 3000, 2000, 3000, 2000, 3000, 400, 3000, 200];
    const fees2 = [300, 200, 2000, 3000, 3000, 2000, 2300, 200, 3000, 5000, '309099\\', 3200, 2000, 3000, 20003, 300, 200, 3000, 2000];

    const letter = "font-normal text-[#666] font-['Open_Sans',sans-serif] text-xs leading-none";
    const picked = "bg-[#e1e1e1] font-bold text-[#217346] font-['Open_Sans',sans-serif] text-xs leading-none";
    const plain = 'p-0 border-r border-b border-[#d4d4d4]';
    const boxed = 'p-0 border-r border-b border-[#222]';
    const digits = "font-['Open_Sans',sans-serif] text-xs leading-none";
    const flag = '<i class="absolute right-0 top-0 border-[3px] border-t-[#c8102e] border-r-[#c8102e] border-b-transparent border-l-transparent"></i>';

    document.getElementById('cols').innerHTML = widths.map(w => `<col style="width:${w}px">`).join('') + '<col>';

    document.getElementById('letters').innerHTML =
      '<th class="p-0 border-r border-b border-r-[#dcdcdc] border-b-[#ababab]"><svg class="w-[10px] h-[10px] ml-auto mr-[3px]" viewBox="0 0 10 10"><path d="M10 0v10H0z" fill="#dadada"/></svg></th>' +
      'ABCDEFGHIJKLMNOPQRS'.split('').map(l => l === 'B'
        ? `<th class="p-0 border-r border-b-2 border-r-[#d0d0d0] border-b-[#217346] ${picked}">B</th>`
        : `<th class="p-0 border-r border-b border-r-[#dcdcdc] border-b-[#ababab] ${letter}">${l}</th>`).join('');

    function cell(r, c) {
      // second copy of the list starts at column J
      const right = c >= 9;
      const k = right ? c - 9 : c;
      const i = r - 2;
      // column I holds the left edge of the second list
      if (c === 8 && r < 21) return '<td class="p-0 border-r border-b border-r-[#222] border-b-[#d4d4d4]"></td>';
      if (k > 5) return `<td class="${plain}"></td>`;
      if (r === 1) return `<td class="p-0 border-r border-b border-r-[#1c2e12] border-b-[#222] bg-[#31501f] text-center text-[#eef3ea]">${heads[k]}</td>`;
      if (r === 21 && k === 5) return `<td class="${plain} pr-[2px] text-right ${digits}">${right ? 54703 : 40800}</td>`;
      if (r > 20) return `<td class="${plain}"></td>`;
      if (k === 0) return `<td class="${boxed} text-center ${digits}">${i + 1}</td>`;
      if (k === 1) {
        let mark = '';
        if (!right && r === 3) mark = flag + '<i class="absolute -inset-px -left-[2px] border-2 border-dashed border-[#217346]"></i>';
        if (!right && r === 8) mark = '<i class="absolute -inset-px -left-[2px] border-2 border-[#217346]"></i><i class="absolute -right-[3px] -bottom-[3px] w-[5px] h-[5px] bg-[#217346] z-10"></i>';
        return `<td class="relative ${boxed} text-center">${sname[i]}${mark}</td>`;
      }
      if (k === 2) return `<td class="relative ${boxed} text-center">${fname[i]}${right && r === 8 ? flag : ''}</td>`;
      if (k === 3) return right
        ? `<td class="${boxed} pr-[5px] text-right ${digits}">7.81E+08</td>`
        : `<td class="${boxed} text-center ${digits}">780983888</td>`;
      if (k === 4) {
        const color = !right && r === 20 ? 'text-[#a0527d]' : 'text-[#2e75b6]';
        return `<td class="${boxed}"><div class="flex justify-center overflow-hidden leading-4"><a href="mailto:${email[i]}@gmail.com" class="underline ${color}">${email[i]}@gmail.com</a></div></td>`;
      }
      if (!right) return `<td class="${plain} text-center ${digits}">${fees[i]}</td>`;
      return r === 12
        ? `<td class="${plain} pl-[2px] text-left ${digits}">${fees2[i]}</td>`
        : `<td class="${plain} pr-[2px] text-right ${digits}">${fees2[i]}</td>`;
    }

    let html = '';
    for (let r = 1; r <= 24; r++) {
      // every fifth row is a pixel shorter
      html += r % 5 === 3 ? '<tr class="h-[18px]">' : '<tr class="h-[19px]">';
      html += r === 8
        ? `<th class="p-0 border-r-2 border-b border-r-[#217346] border-b-[#dcdcdc] ${picked}">8</th>`
        : `<th class="p-0 border-r border-b border-r-[#ababab] border-b-[#dcdcdc] ${letter}">${r}</th>`;
      for (let c = 0; c < 19; c++) html += cell(r, c);
      html += '</tr>';
    }
    document.getElementById('rows').innerHTML = html;
  </script>
</body>
</html>
